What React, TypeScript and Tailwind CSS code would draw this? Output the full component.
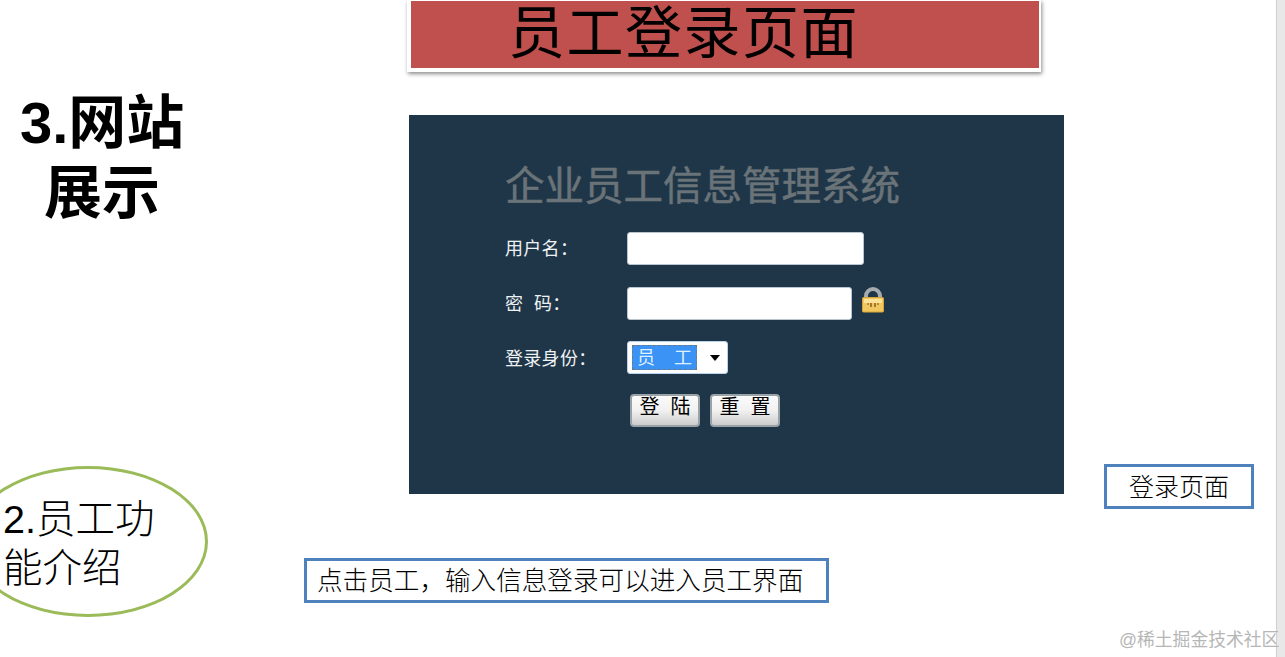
const SANS = 'font-["Liberation_Sans","Noto_Sans_CJK_SC",sans-serif]';

function LockIcon() {
  return (
    <svg width="24" height="26" viewBox="0 0 24 26">
      <path d="M5 13V9a7 7 0 0 1 14 0v4" fill="none" stroke="#a4aaae" strokeWidth="4" />
      <rect x="1.5" y="10.5" width="21" height="14.5" rx="1" fill="#f0c760" stroke="#d8a538" />
      <rect x="3" y="12" width="18" height="4" fill="#fbe296" />
      <rect x="6" y="16" width="2" height="2" fill="#b98a36" />
      <rect x="9" y="16" width="2" height="4" fill="#a5772a" />
      <rect x="13" y="16" width="2" height="4" fill="#a5772a" />
      <rect x="16" y="16" width="2" height="2" fill="#b98a36" />
    </svg>
  );
}

function FormRow({ label, children }: { label: string; children: React.ReactNode }) {
  return (
    <div className="flex items-center h-[33px]">
      <span className="w-[122px] text-[18px] tracking-[0.3px] leading-none text-[#eef2f4] whitespace-pre">{label}</span>
      {children}
    </div>
  );
}

function SketchButton({ label }: { label: string }) {
  return (
    <button className="w-[70px] h-[33px] rounded-[4px] border-2 border-[#98a2a7] bg-gradient-to-b from-[#fbfbfb] via-[#f1f1f1] to-[#cdcdcd] text-[20px] leading-none text-black pb-[7px] whitespace-pre">
      {label}
    </button>
  );
}

export default function App() {
  return (
    <div className={`relative w-[1285px] h-[657px] overflow-hidden bg-white ${SANS}`}>
      {/* scrollbar of the slide viewer */}
      <div className="absolute top-0 right-0 h-full w-[9px] bg-[#e8e8e8] border-l border-[#d0d0d0]" />

      {/* title bar */}
      <div className="absolute left-[407px] top-0 w-[634px] h-[72px] bg-white pt-px pl-1 pr-[2px] pb-1 shadow-[1px_2px_4px_rgba(0,0,0,0.45)]">
        <div className="h-[67px] bg-[#c0504d] pl-[97px] pt-[2px] text-[57px] tracking-[1.5px] leading-[60px] text-black whitespace-nowrap">
          员工登录页面
        </div>
      </div>

      {/* left heading */}
      <h1 className="absolute left-[20px] top-[88px] w-[164px] text-center text-[58px] leading-[70px] font-bold text-black whitespace-nowrap">
        3.网站
        <br />
        展示
      </h1>

      {/* login panel */}
      <div className="absolute left-[409px] top-[115px] w-[655px] h-[379px] bg-[#1f3648] pl-[96px] pt-[50px]">
        <div className="text-[39.5px] leading-[42px] text-[#6a7378] [-webkit-text-stroke:0.5px_#6a7378] whitespace-nowrap">
          企业员工信息管理系统
        </div>
        <div className="mt-[25px] flex flex-col gap-[22px]">
          <FormRow label="用户名：">
            <div className="w-[237px] h-[33px] rounded-[3px] bg-white border border-[#b9c6d0]" />
          </FormRow>
          <FormRow label="密  码：">
            <div className="w-[225px] h-[33px] rounded-[3px] bg-white border border-[#b9c6d0]" />
            <span className="ml-[9px] -mt-[7px]">
              <LockIcon />
            </span>
          </FormRow>
          <FormRow label="登录身份：">
            <div className="w-[101px] h-[33px] -mt-[2px] rounded-[3px] bg-white border border-[#b9d3ea] flex items-center pl-[4px]">
              <div className="w-[65px] h-[25px] bg-[#3a93f5] border border-dashed border-[#6f7a80] flex items-center justify-between px-[4px] text-[18px] leading-none text-[#dff0ff]">
                <span>员</span>
                <span>工</span>
              </div>
              <div className="ml-[13px] w-0 h-0 border-x-[5px] border-x-transparent border-t-[6px] border-t-black" />
            </div>
          </FormRow>
        </div>
        <div className="ml-[125px] mt-[19px] flex gap-[10px]">
          <SketchButton label="登  陆" />
          <SketchButton label="重  置" />
        </div>
      </div>

      {/* green callout */}
      <div className="absolute -left-[32px] top-[466px] w-[240px] h-[151px] rounded-[50%] border-[3px] border-[#9bbb59] pl-[32px] pt-[26px] text-[39.5px] leading-[49px] text-black font-light whitespace-nowrap">
        2.员工功
        <br />
        能介绍
      </div>

      {/* captions */}
      <div className="absolute left-[304px] top-[558px] w-[525px] h-[45px] border-[3px] border-[#4f81bd] pl-[10px] text-[25.6px] leading-[40px] text-black whitespace-nowrap font-light">
        点击员工，输入信息登录可以进入员工界面
      </div>
      <div className="absolute left-[1104px] top-[464px] w-[150px] h-[45px] border-[3px] border-[#4f81bd] text-center text-[25px] leading-[40px] text-black whitespace-nowrap font-light">
        登录页面
      </div>

      {/* watermark */}
      <div className="absolute left-[1119px] top-[629px] text-[17.8px] leading-[22px] text-[#b6b6b6] whitespace-nowrap">
        @稀土掘金技术社区
      </div>
    </div>
  );
}
